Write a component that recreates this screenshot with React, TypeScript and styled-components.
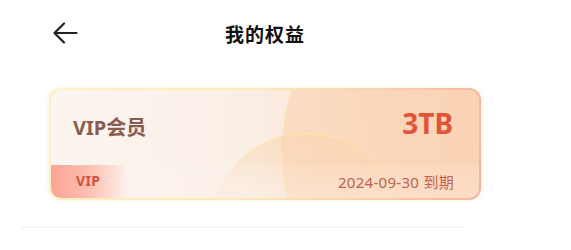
import React from 'react'
import styled, { createGlobalStyle } from 'styled-components'

const GlobalStyle = createGlobalStyle`
    body {
        margin: 0;
        background: #ffffff;
        font-family: "Noto Sans", "Noto Sans CJK SC", sans-serif;
    }
`

const Page = styled.div`
    width: 571px;
    height: 250px;
    overflow: hidden;
    background: #ffffff;
`

const Header = styled.div`
    display: flex;
    align-items: center;
    height: 66px;
    padding-left: 52px;
`

const BackButton = styled.div`
    display: flex;
    width: 26px;
    height: 22px;
    color: #222222;
`

const Title = styled.h1`
    margin: 0 0 0 147px;
    font-family: "Noto Sans CJK SC", sans-serif;
    font-size: 19px;
    font-weight: 700;
    color: #111111;
    letter-spacing: 1px;
`

const CardFrame = styled.div`
    margin: 22px 0 0 49px;
    width: 432px;
    height: 112px;
    box-sizing: border-box;
    padding: 2px;
    border-radius: 12px;
    background: linear-gradient(100deg, #fdf1c3 0%, #fce9bd 45%, #f9c9ad 80%, #f7b39b 100%);
    box-shadow: 0 0 4px rgba(250, 215, 170, 0.45);
`

const Card = styled.div`
    position: relative;
    height: 100%;
    border-radius: 10px;
    overflow: hidden;
    display: flex;
    flex-direction: column;
    background: linear-gradient(90deg, #fcf5ef 0%, #faefe7 45%, #fbe2d0 70%, #fbd7c1 100%);

    &::before {
        content: '';
        position: absolute;
        left: 231px;
        top: -140px;
        width: 400px;
        height: 400px;
        border-radius: 50%;
        border: 1px solid rgba(253, 226, 150, 0.8);
        background: radial-gradient(circle at 30% 50%, rgba(250, 208, 170, 0.55), rgba(250, 200, 165, 0.35));
    }

    &::after {
        content: '';
        position: absolute;
        left: 160px;
        top: 43px;
        width: 190px;
        height: 190px;
        border-radius: 50%;
        border-top: 1px solid rgba(253, 232, 150, 0.95);
        background: linear-gradient(180deg, rgba(250, 212, 175, 0.55), rgba(250, 225, 200, 0) 42%);
    }
`

const TopRow = styled.div`
    position: relative;
    z-index: 1;
    height: 75px;
    box-sizing: border-box;
    display: flex;
    align-items: center;
    justify-content: space-between;
    padding: 0 26px 10px 22px;
`

const PlanName = styled.span`
    font-size: 20px;
    font-weight: 700;
    color: #8b5b50;
    margin-top: 7px;
`

const Capacity = styled.span`
    font-size: 28px;
    font-weight: 700;
    color: #e0553a;
`

const BottomRow = styled.div`
    position: relative;
    z-index: 1;
    flex: 1;
    display: flex;
    align-items: stretch;
    justify-content: space-between;
    background: linear-gradient(180deg, rgba(255, 248, 244, 0.1), rgba(255, 245, 238, 0.3));
`

const Tag = styled.div`
    display: flex;
    align-items: center;
    width: 78px;
    padding: 0 0 2px 25px;
    box-sizing: border-box;
    border-top-right-radius: 10px;
    background: linear-gradient(90deg, #fba494 0%, #fcc0b3 50%, rgba(253, 225, 215, 0) 100%);
    font-size: 14px;
    font-weight: 700;
    color: #d5503c;
    letter-spacing: 0.3px;
`

const Expiry = styled.span`
    align-self: center;
    margin: 0 25px 0 0;
    font-size: 15px;
    color: #c0604f;
    letter-spacing: 0.3px;
`

const Divider = styled.div`
    margin: 26px 0 0 21px;
    width: 443px;
    height: 2px;
    background: #f6f6f6;
`

const ArrowIcon = () => (
    <svg width="26" height="22" viewBox="0 0 26 22" fill="none">
        <path d="M24.5 11H2.5M12 1.5L2.5 11L12 20.5" stroke="currentColor" strokeWidth="2.2" strokeLinecap="round" strokeLinejoin="round" />
    </svg>
)

const App: React.FunctionComponent = () => {
    return (
        <>
            <GlobalStyle />
            <Page>
                <Header>
                    <BackButton>
                        <ArrowIcon />
                    </BackButton>
                    <Title>我的权益</Title>
                </Header>
                <CardFrame>
                    <Card>
                        <TopRow>
                            <PlanName>VIP会员</PlanName>
                            <Capacity>3TB</Capacity>
                        </TopRow>
                        <BottomRow>
                            <Tag>VIP</Tag>
                            <Expiry>2024-09-30 到期</Expiry>
                        </BottomRow>
                    </Card>
                </CardFrame>
                <Divider />
            </Page>
        </>
    )
}
export default App
